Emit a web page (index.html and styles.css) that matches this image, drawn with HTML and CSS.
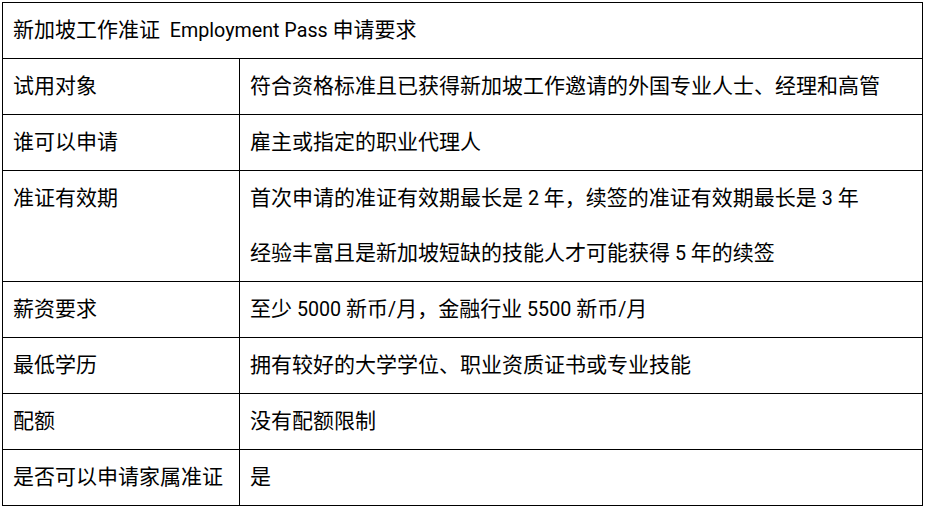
FILE: index.html
```html
<!DOCTYPE html>
<html lang="zh-CN">
<head>
<meta charset="utf-8">
<title>新加坡工作准证 Employment Pass 申请要求</title>
<link rel="stylesheet" href="styles.css">
</head>
<body>
<table class="ep-table">
  <colgroup>
    <col class="col-label">
    <col class="col-value">
  </colgroup>
  <thead>
    <tr>
      <th colspan="2" class="title">新加坡工作准证<span class="lat">&nbsp; Employment Pass </span>申请要求</th>
    </tr>
  </thead>
  <tbody>
    <tr>
      <td>试用对象</td>
      <td>符合资格标准且已获得新加坡工作邀请的外国专业人士、经理和高管</td>
    </tr>
    <tr>
      <td>谁可以申请</td>
      <td>雇主或指定的职业代理人</td>
    </tr>
    <tr>
      <td class="top">准证有效期</td>
      <td>
        <p>首次申请的准证有效期最长是<span class="lat"> 2 </span>年，续签的准证有效期最长是<span class="lat"> 3 </span>年</p>
        <p>经验丰富且是新加坡短缺的技能人才可能获得<span class="lat"> 5 </span>年的续签</p>
      </td>
    </tr>
    <tr>
      <td>薪资要求</td>
      <td>至少<span class="lat"> 5000 </span>新币<span class="lat">/</span>月，金融行业<span class="lat"> 5500 </span>新币<span class="lat">/</span>月</td>
    </tr>
    <tr>
      <td>最低学历</td>
      <td>拥有较好的大学学位、职业资质证书或专业技能</td>
    </tr>
    <tr>
      <td>配额</td>
      <td>没有配额限制</td>
    </tr>
    <tr>
      <td>是否可以申请家属准证</td>
      <td>是</td>
    </tr>
  </tbody>
</table>
</body>
</html>
```

FILE: styles.css
```css
html, body {
  background: #ffffff;
}
body {
  margin: 2px 0 0 2px;
  font-family: "Roboto", "Noto Sans CJK SC", sans-serif;
  font-size: 21px;
  color: #000000;
}
.ep-table {
  border-collapse: collapse;
  width: 921px;
  table-layout: fixed;
}
.col-label {
  width: 237px;
}
.ep-table th,
.ep-table td {
  border: 1px solid #000000;
  padding: 0 10px;
  height: 55px;
  line-height: 55px;
  text-align: left;
  font-weight: normal;
  vertical-align: middle;
  white-space: nowrap;
  box-sizing: border-box;
}
.ep-table td.top {
  vertical-align: top;
}
.ep-table p {
  margin: 0;
  height: 55px;
  line-height: 55px;
}
.lat {
  font-size: 19.7px;
}
```
